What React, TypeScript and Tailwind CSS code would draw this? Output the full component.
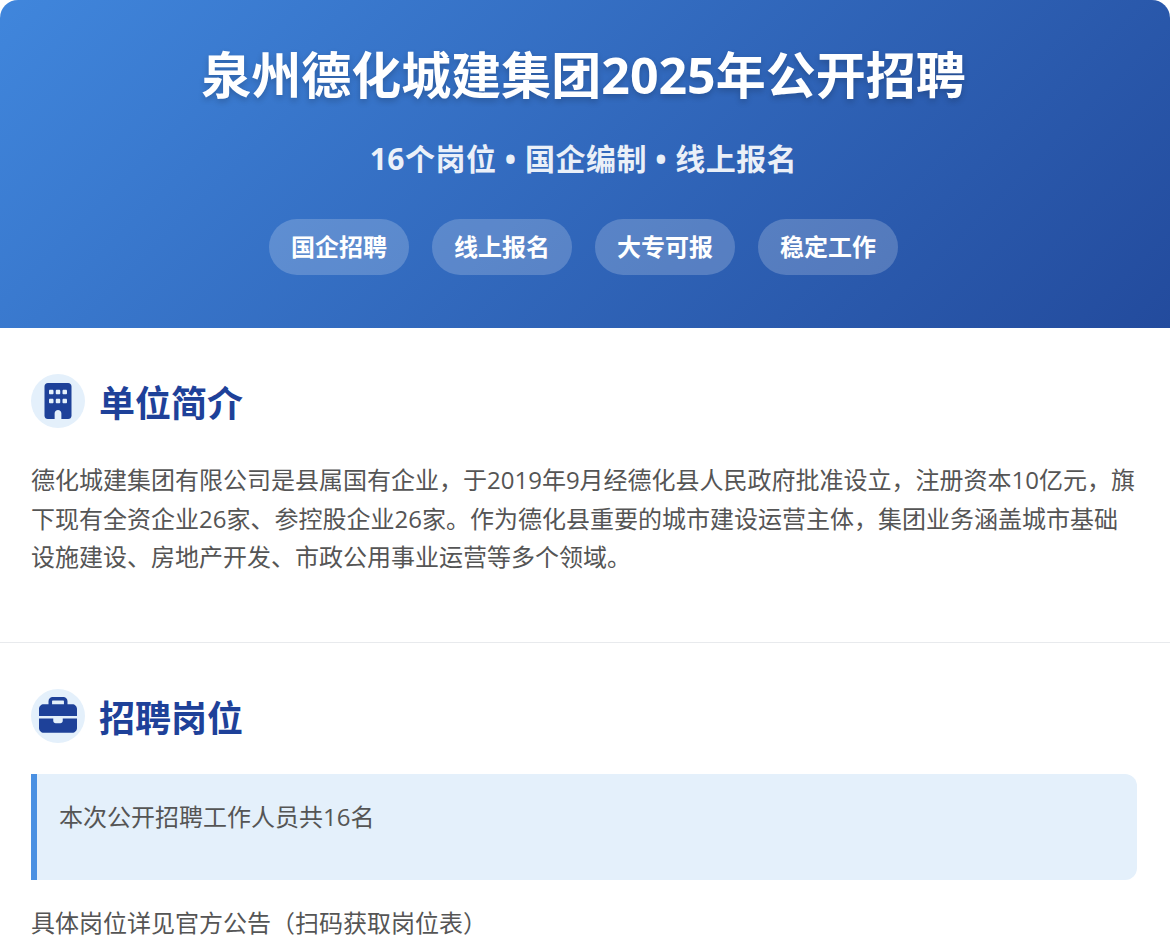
import { FaBuilding, FaBriefcase } from "react-icons/fa6";

const tags = ["国企招聘", "线上报名", "大专可报", "稳定工作"];

function SectionTitle({ icon, title }: { icon: React.ReactNode; title: string }) {
  return (
    <div className="flex items-center gap-[14px]">
      <div className="flex h-[54px] w-[54px] items-center justify-center rounded-full bg-[#e4f0fb] text-[36px] text-[#1e4199]">
        {icon}
      </div>
      <h2 className="h-[54px] pt-[3px] text-[36px] leading-[54px] font-bold text-[#1e4199]">{title}</h2>
    </div>
  );
}

export default function App() {
  return (
    <div className="min-h-[947px] overflow-hidden bg-white font-['Open_Sans','Noto_Sans_CJK_SC',sans-serif]">
      <header className="flex h-[328px] flex-col items-center rounded-t-[18px] bg-[linear-gradient(135deg,#4086dc,#234b9d)] pt-[39px] pr-[3px] text-white">
        <h1 className="text-[50px] leading-[72px] font-bold [text-shadow:0_3px_6px_rgba(0,0,0,0.2)]">
          泉州德化城建集团2025年公开招聘
        </h1>
        <p className="mt-[25px] text-[30px] leading-[45px] font-bold tracking-[0.5px] opacity-90">16个岗位 • 国企编制 • 线上报名</p>
        <div className="mt-[38px] flex gap-[23px]">
          {tags.map((tag) => (
            <span key={tag} className="flex h-[56px] items-center rounded-full bg-white/20 px-[22px] text-[24px] font-bold">
              {tag}
            </span>
          ))}
        </div>
      </header>

      <section className="border-b border-[#e8eaed] pt-[46px] pr-[33px] pb-[65px] pl-[31px]">
        <SectionTitle icon={<FaBuilding />} title="单位简介" />
        <p className="mt-[33px] text-[24px] leading-[38.7px] text-[#555555]">
          德化城建集团有限公司是县属国有企业，于2019年9月经德化县人民政府批准设立，注册资本10亿元，旗下现有全资企业26家、参控股企业26家。作为德化县重要的城市建设运营主体，集团业务涵盖城市基础设施建设、房地产开发、市政公用事业运营等多个领域。
        </p>
      </section>

      <section className="pt-[46px] pr-[33px] pl-[31px]">
        <SectionTitle icon={<FaBriefcase className="text-[38px]" />} title="招聘岗位" />
        <div className="mt-[31px] h-[106px] rounded-r-[12px] border-l-[6px] border-[#4a90e2] bg-[#e4f0fb] pt-[23px] pl-[22px] text-[24px] leading-[39px] text-[#555555]">
          本次公开招聘工作人员共16名
        </div>
        <p className="mt-[23px] text-[24px] leading-[39px] text-[#555555]">具体岗位详见官方公告（扫码获取岗位表）</p>
      </section>
    </div>
  );
}
